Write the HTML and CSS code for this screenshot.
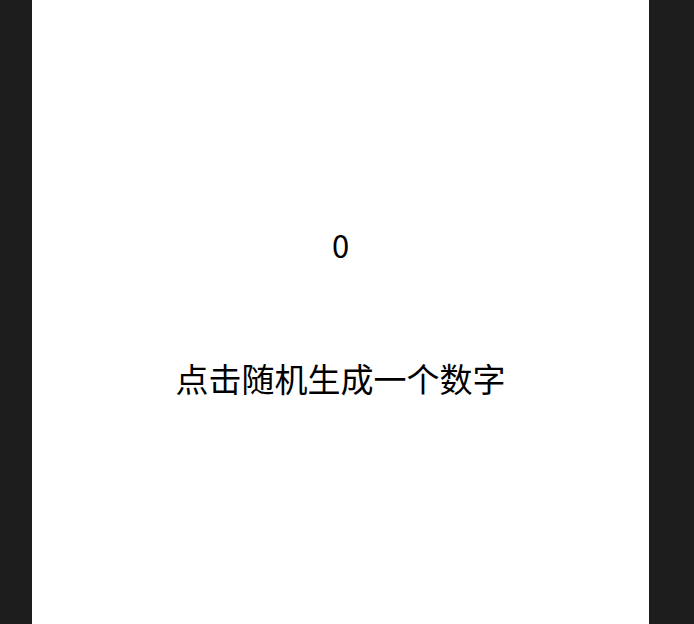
FILE: index.html
```html
<!DOCTYPE html>
<html lang="zh">
<head>
<meta charset="utf-8">
<link rel="stylesheet" href="styles.css">
</head>
<body>
<div class="page">
  <main class="panel">
    <div class="number">0</div>
    <div class="hint">点击随机生成一个数字</div>
  </main>
</div>
</body>
</html>
```
FILE: styles.css
```css
html, body {
  margin: 0;
  padding: 0;
  height: 100%;
  background: #1d1d1d;
}
.page {
  height: 100%;
  display: flex;
  padding-left: 32px;
  box-sizing: border-box;
}
.panel {
  width: 617px;
  height: 100%;
  background: #ffffff;
  display: flex;
  flex-direction: column;
  align-items: center;
  justify-content: center;
  gap: 95px;
  font-family: "Noto Sans CJK SC", "Noto Sans", sans-serif;
  color: #000;
}
.number {
  font-size: 31px;
  line-height: 36px;
}
.hint {
  font-size: 33px;
  line-height: 40px;
}
```
